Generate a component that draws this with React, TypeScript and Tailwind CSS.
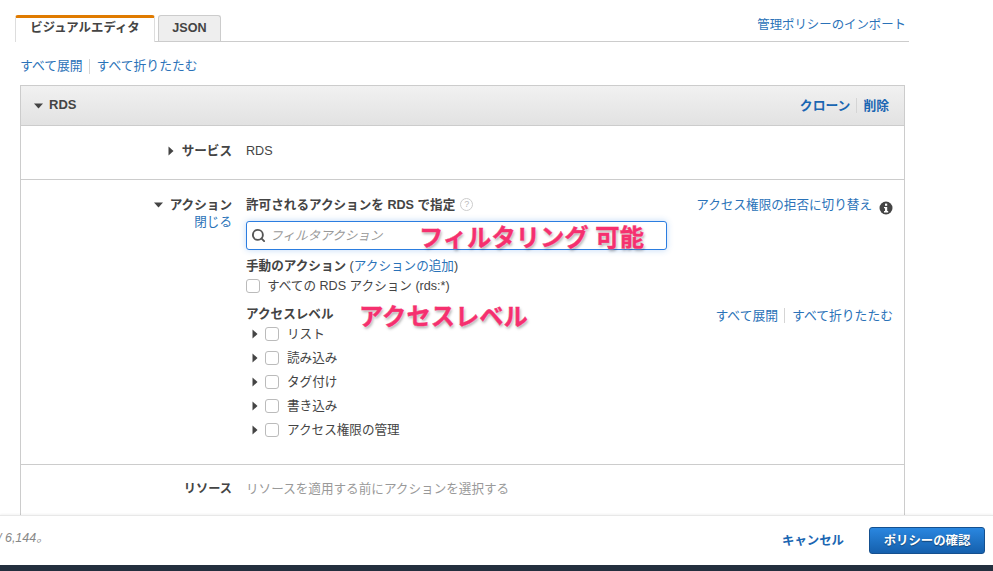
import { Search } from "lucide-react"

const font = { jp: "font-['Liberation_Sans','Noto_Sans_CJK_JP',sans-serif]" }

function Caret({ open = false, className = "" }: { open?: boolean; className?: string }) {
  if (open) {
    return (
      <svg width="9" height="6" viewBox="0 0 9 6" className={`shrink-0 fill-[#444] ${className}`}>
        <polygon points="0,0.5 9,0.5 4.5,5.5" />
      </svg>
    )
  }
  return (
    <svg width="6" height="10" viewBox="0 0 6 10" className={`shrink-0 fill-[#444] ${className}`}>
      <polygon points="0.5,0.5 5.5,5 0.5,9.5" />
    </svg>
  )
}

function Check() {
  return <span className="block h-[14px] w-[14px] shrink-0 rounded-[3px] border border-[#bbb] bg-white" />
}

function Sep({ className = "" }: { className?: string }) {
  return <span className={`w-px bg-[#d5d5d5] ${className}`} />
}

function InfoDot() {
  return (
    <svg width="14" height="14" viewBox="0 0 14 14" className="mt-[6px] shrink-0">
      <circle cx="7" cy="7" r="6.5" fill="#444" />
      <rect x="6" y="2.6" width="2.2" height="2.2" fill="#fff" />
      <polygon points="5,6 8.2,6 8.2,10 9.2,10 9.2,11.4 5,11.4 5,10 6,10 6,7.2 5,7.2" fill="#fff" />
    </svg>
  )
}

const levels = ["リスト", "読み込み", "タグ付け", "書き込み", "アクセス権限の管理"]

function Note({ children, className }: { children: string; className: string }) {
  return (
    <span
      className={`absolute text-[24.3px] leading-none font-bold text-[#f5306f] [-webkit-text-stroke:0.4px_#f5306f] [text-shadow:0_0_2px_#fff,1px_2px_3px_rgba(0,0,0,0.35)] ${className}`}
    >
      {children}
    </span>
  )
}

function ExpandLinks({ className = "" }: { className?: string }) {
  return (
    <div className={`flex items-center text-[12.8px] text-[#2a72b8] ${className}`}>
      <a>すべて展開</a>
      <Sep className="mr-[7px] ml-[6px] h-[15px]" />
      <a>すべて折りたたむ</a>
    </div>
  )
}

export default function App() {
  return (
    <div className={`flex h-[571px] w-[993px] flex-col overflow-hidden bg-white text-[12.6px] text-[#444] ${font.jp}`}>
      <div className="min-h-0 flex-1 overflow-hidden pt-[15px]">
        <div className="ml-[15px] flex h-[27px] w-[894px] border-b border-[#ccc]">
          <div className="h-[27px] w-[140px] rounded-t-[3px] border-x border-t-[3px] border-x-[#ddd] border-t-[#e07b00] bg-white text-center text-[12.4px] leading-[21px] font-bold text-[#444]">
            ビジュアルエディタ
          </div>
          <div className="ml-[3px] h-[26px] w-[63px] rounded-t-[3px] border border-b-0 border-[#ccc] bg-[#eee] text-center leading-[24px] font-bold text-[#444]">
            JSON
          </div>
          <a className="mr-[3px] ml-auto text-[12.4px] leading-[20px] text-[#2a72b8]">管理ポリシーのインポート</a>
        </div>

        <div className="mt-[16px] ml-[20px] flex h-[16px] items-center">
          <ExpandLinks />
        </div>

        <div className="mt-[11px] ml-[20px] w-[885px] border-x border-t border-[#ccc]">
          <div className="flex h-[40px] items-center border-b border-[#ccc] bg-gradient-to-b from-[#f1f1f1] to-[#e2e2e2] pr-[15px] pl-[13px]">
            <Caret open className="mr-[6px]" />
            <span className="pb-[2px] text-[13px] font-bold">RDS</span>
            <div className="ml-auto flex items-center text-[12.8px] font-bold text-[#1a66b2]">
              <a>クローン</a>
              <Sep className="mx-[6px] h-[15px]" />
              <a>削除</a>
            </div>
          </div>

          <div className="flex h-[54px] border-b border-[#ccc] pt-[17px]">
            <div className="flex w-[211px] justify-end">
              <div className="flex h-[16px] items-center gap-[8px] font-bold">
                <Caret />
                サービス
              </div>
            </div>
            <div className="ml-[14px] leading-[16px]">RDS</div>
          </div>

          <div className="relative flex h-[285px] border-b border-[#ccc] pt-[17px]">
            <div className="flex w-[211px] flex-col items-end">
              <div className="flex h-[16px] items-center gap-[7px] font-bold">
                <Caret open />
                アクション
              </div>
              <a className="mt-[1px] leading-[16px] text-[#2a72b8]">閉じる</a>
            </div>

            <div className="ml-[14px] w-[647px]">
              <div className="flex h-[16px] items-center justify-between">
                <div className="flex items-center gap-[5px]">
                  <span className="font-bold">許可されるアクションを RDS で指定</span>
                  <span className="mb-[2px] flex h-[13px] w-[13px] items-center justify-center rounded-full border border-[#ccc] text-[9px] leading-none text-[#bbb]">
                    ?
                  </span>
                </div>
                <div className="flex items-center gap-[7px]">
                  <a className="text-[#2a72b8]">アクセス権限の拒否に切り替え</a>
                  <InfoDot />
                </div>
              </div>

              <div className="mt-[8px] flex h-[29px] w-[421px] items-center rounded-[3px] border border-[#2b7de0] bg-white pl-[4px] shadow-[0_0_6px_rgba(43,125,224,0.3)]">
                <Search size={15} strokeWidth={3} className="mr-[4px] text-[#555]" />
                <span className="pt-[2px] text-[#999] italic">フィルタアクション</span>
              </div>

              <div className="mt-[8px] h-[16px] leading-[16px]">
                <span className="font-bold">手動のアクション</span> (<a className="text-[#2a72b8]">アクションの追加</a>)
              </div>
              <div className="mt-[4px] flex h-[16px] items-center gap-[7px]">
                <Check />
                <span>すべての RDS アクション (rds:*)</span>
              </div>

              <div className="mt-[12px] flex h-[16px] items-center justify-between">
                <span className="font-bold">アクセスレベル</span>
                <ExpandLinks className="pt-[3px]" />
              </div>
              <div className="mt-[4px] flex flex-col gap-[8px] pl-[6px]">
                {levels.map((l) => (
                  <div key={l} className="flex h-[16px] items-center">
                    <Caret className="mr-[7px]" />
                    <Check />
                    <span className="ml-[8px]">{l}</span>
                  </div>
                ))}
              </div>
            </div>

            <Note className="top-[46px] left-[398px]">フィルタリング 可能</Note>
            <Note className="top-[125px] left-[338px]">アクセスレベル</Note>
          </div>

          <div className="flex h-[60px] pt-[16px]">
            <div className="w-[211px] text-right text-[12.2px] leading-[16px] font-bold">リソース</div>
            <div className="ml-[14px] leading-[16px] text-[#999]">リソースを適用する前にアクションを選択する</div>
          </div>
        </div>
      </div>

      <div className="relative flex h-[50px] shrink-0 items-center border-t border-[#e8e8e8] bg-white shadow-[0_-1px_2px_rgba(0,0,0,0.05)]">
        <span className="-ml-[2px] pb-[4px] text-[12.5px] text-[#888] italic">/ 6,144。</span>
        <a className="mr-[25px] ml-auto pt-[2px] text-[12.4px] font-bold text-[#1a66b2]">キャンセル</a>
        <div className="mr-[8px] flex h-[27px] w-[116px] items-center justify-center rounded-[3px] border border-[#15508f] bg-gradient-to-b from-[#2a87e0] to-[#1560ad] pt-[1px] text-[12.4px] font-bold text-white [text-shadow:0_1px_1px_rgba(0,0,0,0.4)]">
          ポリシーの確認
        </div>
      </div>
      <div className="h-[6px] shrink-0 bg-[#232f3e]" />
    </div>
  )
}
